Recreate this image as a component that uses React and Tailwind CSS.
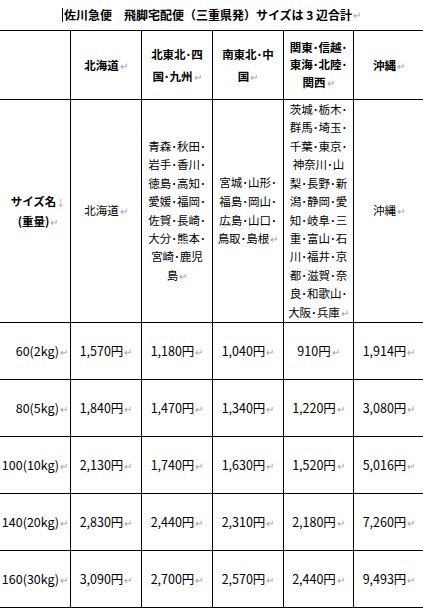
import React from "react";

const Ret = () => <span className="text-[#a0a0a0] text-[10px] font-normal ml-[1px]">↵</span>;

const cell = "border-r border-b border-black flex items-center justify-center text-center overflow-hidden";

const rows = [
  ["60(2kg)", "1,570", "1,180", "1,040", "910", "1,914"],
  ["80(5kg)", "1,840", "1,470", "1,340", "1,220", "3,080"],
  ["100(10kg)", "2,130", "1,740", "1,630", "1,520", "5,016"],
  ["140(20kg)", "2,830", "2,440", "2,310", "2,180", "7,260"],
  ["160(30kg)", "3,090", "2,700", "2,570", "2,440", "9,493"],
];

const Lines = ({ lines }) => (
  <div>
    {lines.map((l, i) => (
      <div key={i} className="whitespace-nowrap">
        {l}
        {i === lines.length - 1 && <Ret />}
      </div>
    ))}
  </div>
);

export default function App() {
  return (
    <div className="w-[423px] h-[610px] overflow-hidden bg-white text-black font-['Noto_Sans_CJK_JP',sans-serif]">
      <div className="h-[30px] flex items-center justify-center">
        <div className="flex items-center text-[12px] font-bold leading-none">
          <span className="w-[1px] h-[14px] bg-black mr-[1px]" />
          <span className="whitespace-nowrap">佐川急便　飛脚宅配便（三重県発）サイズは 3 辺合計</span>
          <Ret />
        </div>
      </div>
      <div className="w-[425px] border-t border-black grid grid-cols-[71px_71px_71px_71px_70px_71px] grid-rows-[69px_223px_57px_57px_57px_57px_57px] text-[11.5px]">
        {/* header row */}
        <div className={cell} />
        <div className={`${cell} font-bold leading-[22px]`}>
          <Lines lines={["北海道"]} />
        </div>
        <div className={`${cell} font-bold leading-[22px]`}>
          <Lines lines={["北東北･四", "国･九州"]} />
        </div>
        <div className={`${cell} font-bold leading-[22px]`}>
          <Lines lines={["南東北･中", "国"]} />
        </div>
        <div className={`${cell} font-bold leading-[17.5px]`}>
          <Lines lines={["関東･信越･", "東海･北陸･", "関西"]} />
        </div>
        <div className={`${cell} font-bold leading-[22px]`}>
          <Lines lines={["沖縄"]} />
        </div>

        {/* region row */}
        <div className={`${cell} font-bold leading-[19px] pl-[6px]`}>
          <div>
            <div className="whitespace-nowrap">
              サイズ名<span className="text-[#a0a0a0] text-[9px] font-normal">↓</span>
            </div>
            <div className="whitespace-nowrap">
              (重量)
              <Ret />
            </div>
          </div>
        </div>
        <div className={`${cell} leading-[18.4px]`}>
          <Lines lines={["北海道"]} />
        </div>
        <div className={`${cell} leading-[18.4px]`}>
          <Lines lines={["青森･秋田･", "岩手･香川･", "徳島･高知･", "愛媛･福岡･", "佐賀･長崎･", "大分･熊本･", "宮崎･鹿児", "島"]} />
        </div>
        <div className={`${cell} leading-[18.6px]`}>
          <Lines lines={["宮城･山形･", "福島･岡山･", "広島･山口･", "鳥取･島根"]} />
        </div>
        <div className={`${cell} leading-[18.4px]`}>
          <Lines
            lines={[
              "茨城･栃木･",
              "群馬･埼玉･",
              "千葉･東京･",
              "神奈川･山",
              "梨･長野･新",
              "潟･静岡･愛",
              "知･岐阜･三",
              "重･富山･石",
              "川･福井･京",
              "都･滋賀･奈",
              "良･和歌山･",
              "大阪･兵庫",
            ]}
          />
        </div>
        <div className={`${cell} leading-[18.4px]`}>
          <Lines lines={["沖縄"]} />
        </div>

        {/* price rows */}
        {rows.map((r) => (
          <React.Fragment key={r[0]}>
            <div className="border-r border-b border-black flex items-center justify-end pr-[2px] overflow-hidden text-[12.5px] whitespace-nowrap">
              {r[0]}
              <Ret />
            </div>
            {r.slice(1).map((p, i) => (
              <div key={i} className={`${cell} text-[12.5px] whitespace-nowrap`}>
                {p}円
                <Ret />
              </div>
            ))}
          </React.Fragment>
        ))}
      </div>
    </div>
  );
}
